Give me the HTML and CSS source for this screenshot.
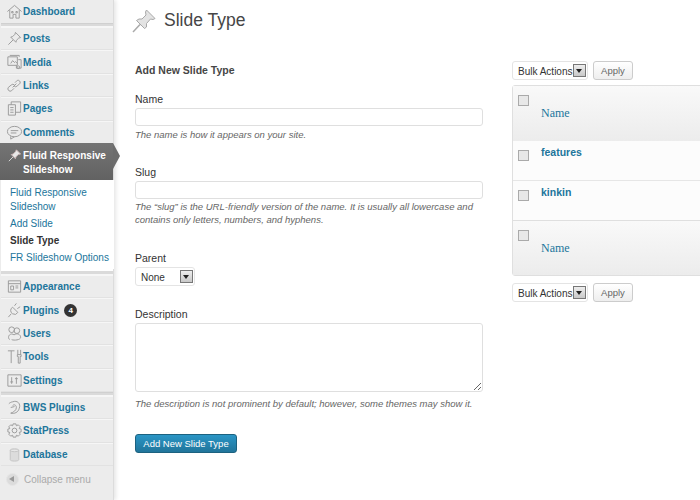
FILE: index.html
```html
<!DOCTYPE html>
<html lang="en">
<head>
  <meta charset="UTF-8">
  <title>Slide Type</title>
  <link rel="stylesheet" href="styles.css">
</head>
<body>
  <div class="wrap">
    <nav class="sidebar">
      <a class="item item-first"><svg class="icon" viewBox="0 0 18 18"><path d="M1.500 9 9 2.500 16.500 9M4 7.500V16h3.500v-4h3v4H14V7.500M6 9h1.500v1.500H6zM10.500 9H12v1.500h-1.500z"/></svg>Dashboard</a>
      <div class="sep"></div>
      <a class="item"><svg class="icon" viewBox="0 0 18 18"><path d="M10 2.500 15.500 8 13.500 8.500 11 11 10.500 13 5 7.500 7 7 9.500 4.500zM7.500 10.500 2.500 15.500"/></svg>Posts</a>
      <a class="item"><svg class="icon" viewBox="0 0 18 18"><path d="M2 3h10v9H2zM4 1.500h10V3M5 10l2-3 2 2 1-1 2 2M13 6h3v9h-5v-3"/><circle cx="13" cy="14" r="1.500"/></svg>Media</a>
      <a class="item"><svg class="icon" viewBox="0 0 18 18"><path d="M9.500 6 12 3.500a2.500 2.500 0 0 1 3 3L12 9.500a2.500 2.500 0 0 1-3.500 0M8.500 12 6 14.500a2.500 2.500 0 0 1-3.500-3.500L5.500 8.500a2.500 2.500 0 0 1 3.500 0M7 11l4-4"/></svg>Links</a>
      <a class="item"><svg class="icon" viewBox="0 0 18 18"><path d="M2.500 5H10v11H2.500zM5.500 5V2h10v11H10M4.500 8H8M4.500 10.500H8M4.500 13H8"/></svg>Pages</a>
      <a class="item"><svg class="icon" viewBox="0 0 18 18"><ellipse cx="9" cy="8" rx="7.500" ry="5.500"/><path d="M5 13v3l4-2.500M5 7h8M5 9.500h6"/></svg>Comments</a>
      <a class="item item-active"><svg class="icon" viewBox="0 0 18 18"><path class="pin-fill" d="M11 3 15.500 7.500 13 8 10.500 10.500 10 12.500 5.500 8 7.500 7.500 10 5z"/><path class="pin-line" d="M7.500 10.500 3 15"/></svg><span>Fluid Responsive Slideshow</span></a>
      <ul class="submenu">
        <li>Fluid Responsive Slideshow</li>
        <li>Add Slide</li>
        <li class="current">Slide Type</li>
        <li>FR Slideshow Options</li>
      </ul>
      <div class="sep sep-wide"></div>
      <a class="item"><svg class="icon" viewBox="0 0 18 18"><path d="M2.500 3h13v12h-13zM2.500 6h13M5 8.500h3v4H5zM10 8.500h3M10 10.500h3"/></svg>Appearance</a>
      <a class="item"><svg class="icon" viewBox="0 0 18 18"><path d="M7 5.500 12.500 11a4 4 0 0 1-5.500 1.500A4 4 0 0 1 7 5.500zM9 4l2-2.500M12 7l3-2M5.500 12.500 2.500 16"/></svg>Plugins<span class="badge">4</span></a>
      <a class="item"><svg class="icon" viewBox="0 0 18 18"><circle cx="6" cy="5" r="3"/><circle cx="11.500" cy="6" r="3"/><path d="M4 15.500c-2-1-2-5.500 2-6 1 0 2 .5 2.500 1 3-2.500 7-.5 7 2.500 0 3-7 3.500-9.500 2.500"/></svg>Users</a>
      <a class="item"><svg class="icon" viewBox="0 0 18 18"><path d="M2 3h7M5.500 3v13M12.500 2v5M15.500 2v5M12 7h4v2h-1v7h-2V9h-1z"/></svg>Tools</a>
      <a class="item"><svg class="icon" viewBox="0 0 18 18"><path d="M2 3h14v12H2zM6 5.500v7M4.500 10.500h3M11 5.500v7M9.500 7h3"/></svg>Settings</a>
      <div class="sep"></div>
      <a class="item"><svg class="icon" viewBox="0 0 18 18"><path d="M7 3c5-2 9 2 7 7-1 4-5 6-9 5 3-1 6-3 6-6 0-2-2-4-4-2M3 5c1-1 3-2 4-2M5 9l4-1"/></svg>BWS Plugins</a>
      <a class="item"><svg class="icon" viewBox="0 0 18 18"><circle cx="9" cy="9" r="2.500"/><path d="M7.500 2h3l.5 2 2-1 2 2-1 2 2 .500v3l-2 .500 1 2-2 2-2-1-.500 2h-3l-.500-2-2 1-2-2 1-2-2-.500v-3l2-.500-1-2 2-2 2 1z"/></svg>StatPress</a>
      <a class="item"><svg class="icon icon-db" viewBox="0 0 18 18"><path d="M4.500 4.500c0-2 9-2 9 0v10c0 2-9 2-9 0zM4.500 4.500c0 2 9 2 9 0"/></svg>Database</a>
      <div class="collapse"><span class="collapse-btn"></span>Collapse menu</div>
    </nav>

    <main class="content">
      <header class="title-row">
        <svg class="title-icon" viewBox="0 0 24 24"><path class="pin-big" d="M14.500 1 23 9.500 21 10.500 18.500 10 14.500 14.500 14.500 18 12.500 19.500 4.500 11.500 7 10 10 10 14 6 13.500 3z"/><path class="pin-needle" d="M8 15.500 1 23"/></svg>
        <h1>Slide Type</h1>
      </header>

      <div class="columns">
        <form class="add-form">
          <h3>Add New Slide Type</h3>

          <div class="field field-name">
            <label for="name">Name</label>
            <input type="text" id="name">
            <p>The name is how it appears on your site.</p>
          </div>

          <div class="field field-slug">
            <label for="slug">Slug</label>
            <input type="text" id="slug">
            <p>The “slug” is the URL-friendly version of the name. It is usually all lowercase and contains only letters, numbers, and hyphens.</p>
          </div>

          <div class="field field-parent">
            <label>Parent</label>
            <div class="select select-parent">None<span class="arrow"></span></div>
          </div>

          <div class="field field-desc">
            <label for="description">Description</label>
            <textarea id="description"></textarea>
            <p>The description is not prominent by default; however, some themes may show it.</p>
          </div>

          <button type="button" class="primary">Add New Slide Type</button>
        </form>

        <section class="list">
          <div class="bulk">
            <div class="select">Bulk Actions<span class="arrow"></span></div>
            <button type="button" class="secondary">Apply</button>
          </div>

          <div class="table">
            <div class="row row-head"><span class="check"></span><span class="col-name">Name</span></div>
            <div class="row row-body"><span class="check"></span><a class="slug-link">features</a></div>
            <div class="row row-body"><span class="check"></span><a class="slug-link">kinkin</a></div>
            <div class="row row-head row-foot"><span class="check"></span><span class="col-name">Name</span></div>
          </div>

          <div class="bulk">
            <div class="select">Bulk Actions<span class="arrow"></span></div>
            <button type="button" class="secondary">Apply</button>
          </div>
        </section>
      </div>
    </main>
  </div>
</body>
</html>
```

FILE: styles.css
```css
* {
  box-sizing: border-box;
}

html, body {
  margin: 0;
  height: 500px;
  overflow: hidden;
}

body {
  font-family: "Liberation Sans", Arial, sans-serif;
  font-size: 11px;
  color: #333;
  background-color: #fff;
}

.wrap {
  display: flex;
  height: 500px;
}

/* left menu */
.sidebar {
  width: 114px;
  flex-shrink: 0;
  height: 500px;
  background-color: #ececec;
  border-right: 1px solid #dcdcdc;
  box-shadow: 2px 0 4px rgba(0, 0, 0, 0.1);
  padding-left: 1px;
}

.item {
  display: flex;
  align-items: center;
  height: 23.4px;
  padding-left: 5px;
  font-size: 10px;
  font-weight: bold;
  color: #21759b;
  border-bottom: 1px solid #e2e2e2;
  border-top: 1px solid #f6f6f6;
}

.item-first {
  height: 23px;
  border-top: 0;
  border-bottom: 0;
}

.icon {
  width: 17px;
  height: 17px;
  flex-shrink: 0;
  fill: none;
  stroke: #999;
  stroke-width: 1;
}

.icon-db {
  fill: #dcdcdc;
  stroke: #c4c4c4;
}

.sep {
  height: 4px;
  background-color: #dadada;
  border-top: 1px solid #d0d0d0;
  border-bottom: 1px solid #f6f6f6;
}

.sep-wide {
  height: 6px;
  border-top: 2px solid #fff;
}

.item-active {
  position: relative;
  align-items: flex-start;
  height: 37px;
  margin: -1px 0 0 -1px;
  padding: 6px 0 0 6px;
  color: #fff;
  line-height: 14px;
  border: 0;
  background: linear-gradient(#747474, #626262);
}

.item-active .icon {
  margin-top: -2px;
}

.item-active::after {
  content: "";
  position: absolute;
  left: 100%;
  top: 0;
  border-left: 7px solid #6c6c6c;
  border-top: 13.500px solid transparent;
  border-bottom: 13.500px solid transparent;
}

.item-active span {
  width: 90px;
}

.pin-fill {
  fill: #e8e8e8;
  stroke: #c9b0b0;
}

.pin-line {
  stroke: #ddd;
}

.submenu {
  list-style: none;
  margin: 0 -1px 0 0;
  padding: 6px 0 1px 9px;
  background-color: #fff;
  color: #21759b;
  font-size: 10px;
}

.submenu li {
  line-height: 14px;
  padding-bottom: 3px;
}

.submenu .current {
  color: #333;
  font-weight: bold;
}

.badge {
  display: inline-block;
  width: 13px;
  height: 13px;
  line-height: 13px;
  margin-left: 5px;
  border-radius: 50%;
  background-color: #333;
  color: #fff;
  font-size: 8px;
  text-align: center;
}

.collapse {
  display: flex;
  align-items: center;
  height: 26px;
  padding-left: 5px;
  font-size: 10px;
  color: #aaa;
}

.collapse-btn {
  position: relative;
  width: 13px;
  height: 13px;
  margin-right: 5px;
  border-radius: 50%;
  background-color: #dcdcdc;
  border: 1px solid #e6e6e6;
}

.collapse-btn::after {
  content: "";
  position: absolute;
  left: 2px;
  top: 2px;
  border-right: 5px solid #999;
  border-top: 3px solid transparent;
  border-bottom: 3px solid transparent;
}

/* page content */
.content {
  flex: 1;
  min-width: 0;
  padding-left: 21px;
}

.title-row {
  display: flex;
  align-items: center;
  height: 41px;
}

.title-icon {
  width: 24px;
  height: 24px;
  margin-left: -3px;
  margin-right: 8px;
}

.pin-big {
  fill: #e3e3e3;
  stroke: #a8a8a8;
}

.pin-needle {
  stroke: #aaa;
  stroke-width: 1.500;
}

h1 {
  margin: 0;
  font-size: 17.500px;
  font-weight: normal;
  color: #464646;
}

.columns {
  display: flex;
  margin-top: 22px;
}

.add-form {
  width: 348px;
  flex-shrink: 0;
}

h3 {
  margin: 0 0 14px;
  font-size: 10.500px;
  line-height: 15px;
  color: #464646;
}

label {
  display: block;
  font-size: 10.500px;
  line-height: 14px;
  margin-bottom: 2px;
}

input, textarea {
  display: block;
  width: 348px;
  border: 1px solid #dfdfdf;
  border-radius: 3px;
  background-color: #fff;
  margin: 0;
  padding: 2px;
}

input {
  height: 18px;
}

textarea {
  height: 69px;
}

.field p {
  margin: 1px 0 0;
  font-size: 9.500px;
  line-height: 13px;
  font-style: italic;
  color: #666;
}

.field-name p {
  margin-top: 2px;
}

.field-name {
  margin-bottom: 24px;
}

.field-slug {
  margin-bottom: 25px;
}

.field-parent {
  margin-bottom: 21px;
}

.field-desc p {
  margin-top: 5px;
}

.select {
  display: flex;
  align-items: center;
  justify-content: space-between;
  width: 76px;
  height: 19px;
  padding: 1px 1px 0 5px;
  border: 1px solid #e4e4e4;
  border-radius: 3px;
  background-color: #fff;
  font-size: 10px;
  white-space: nowrap;
}

.select-parent {
  width: 60px;
}

.arrow {
  position: relative;
  width: 13px;
  height: 13px;
  margin-top: -1px;
  border: 1px solid #777;
  background: linear-gradient(#eee, #c8c8c8);
}

.arrow::after {
  content: "";
  position: absolute;
  left: 2px;
  top: 4px;
  border-top: 4px solid #222;
  border-left: 3.500px solid transparent;
  border-right: 3.500px solid transparent;
}

button {
  font-family: inherit;
  cursor: pointer;
}

.primary {
  display: block;
  width: 102px;
  height: 19px;
  margin-top: 24px;
  padding: 0;
  font-size: 9.500px;
  color: #fff;
  border: 1px solid #1c6280;
  border-radius: 3px;
  background: linear-gradient(#2a95c5, #21759b);
}

.secondary {
  width: 40px;
  height: 19px;
  padding: 0;
  font-size: 9.500px;
  color: #666;
  border: 1px solid #ccc;
  border-radius: 3px;
  background: linear-gradient(#fff, #eee);
}

.list {
  flex: 0 0 auto;
  width: 240px;
  margin-left: 29px;
  margin-top: -2px;
}

.bulk {
  display: flex;
  gap: 5px;
  height: 19px;
}

.table {
  margin: 5px 0 7px;
  border: 1px solid #dfdfdf;
  border-radius: 3px 0 0 3px;
  background-color: #fcfcfc;
}

.row {
  position: relative;
  padding-left: 28px;
}

.row-head {
  height: 55px;
  padding-top: 20px;
  background: linear-gradient(#f9f9f9, #ececec);
}

.row-foot {
  border-top: 1px solid #dfdfdf;
}

.row-body {
  height: 39.500px;
  padding-top: 5px;
  border-bottom: 1px solid #e6e6e6;
}

.row-body:nth-child(3) {
  border-bottom: 0;
}

.check {
  position: absolute;
  left: 5px;
  top: 9px;
  width: 11px;
  height: 11px;
  border: 1px solid #aaa;
  background-color: #e8e8e8;
}

.col-name {
  font-family: "Liberation Serif", serif;
  font-size: 12px;
  color: #21759b;
}

.slug-link {
  font-size: 10.500px;
  font-weight: bold;
  color: #21759b;
}
```
